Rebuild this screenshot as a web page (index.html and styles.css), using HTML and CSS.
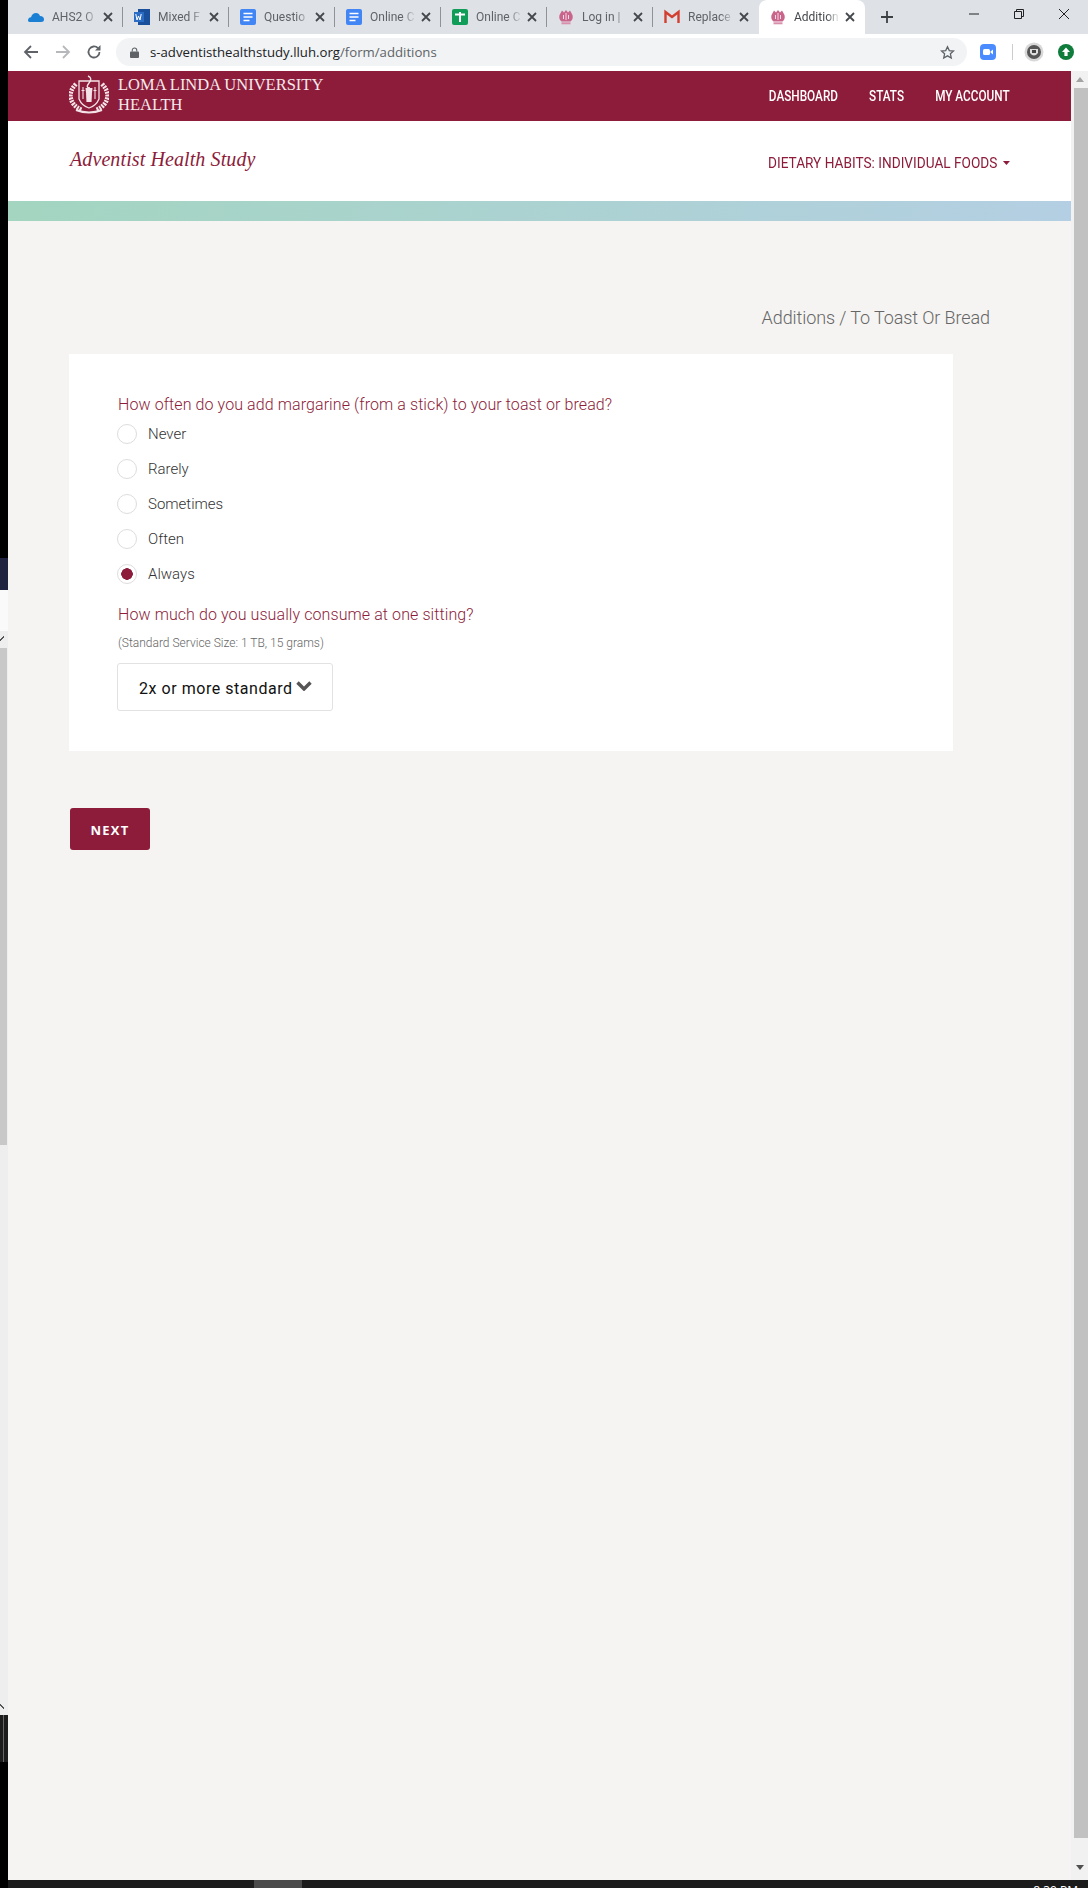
FILE: index.html
```html
<!DOCTYPE html>
<html lang="en">
  <head>
    <meta charset="UTF-8" />
    <meta name="viewport" content="width=device-width, initial-scale=1.0" />
    <title>Additions</title>
    <link rel="stylesheet" href="styles.css">
  </head>
  <body>
    <svg class="defs" width="0" height="0">
      <defs>
        <symbol id="llu" viewBox="0 0 16 16">
          <path d="M4 1.500L6 3.500 8 1l2 2.500 2-2L14.500 6q1 4-2 6.500h-9Q.5 10 1.500 6z" fill="#c9658b"/>
          <path d="M8 4v7M5.500 6v4M10.500 6v4" stroke="#f3d9e3"/>
          <path d="M3.500 14.300h9" stroke="#d88fab" stroke-width="2"/>
        </symbol>
        <symbol id="doc" viewBox="0 0 16 16">
          <rect width="16" height="16" rx="2" fill="#4285f4"/>
          <path d="M3.500 4.500h9M3.500 8h9M3.500 11.500h6" stroke="#fff" stroke-width="1.600"/>
        </symbol>
        <symbol id="close" viewBox="0 0 10 10">
          <path d="M1 1l8 8M9 1l-8 8" stroke="#45484c" stroke-width="1.800"/>
        </symbol>
      </defs>
    </svg>

    <div class="desktop-edge">
      <div class="edge-black"></div>
      <div class="edge-navy"></div>
      <div class="edge-light"></div>
      <div class="edge-track">
        <div class="edge-arrow edge-arrow-up"></div>
        <div class="edge-thumb"></div>
        <div class="edge-arrow edge-arrow-down"></div>
      </div>
      <div class="edge-dark"></div>
      <div class="edge-black edge-end"></div>
    </div>

    <div class="screen">
      <div class="browser">
        <div class="tabstrip">
          <div class="tab">
            <svg class="favicon" viewBox="0 0 16 16"><path d="M0 11.500q0-3 3-3.300Q4.500 4 8 4q3 0 4 3 4 .3 4 3.500 0 2.500-3 2.500H3q-3 0-3-1.500z" fill="#1b7fd4"/></svg>
            <span class="tab-title">AHS2 O</span>
            <svg class="tab-close"><use href="#close"/></svg>
          </div>
          <div class="tab">
            <svg class="favicon" viewBox="0 0 16 16"><rect x="4" y="0" width="12" height="16" fill="#1a4f9c"/><rect x="0" y="3" width="10" height="10" fill="#2b6cc4"/><path d="M1.800 5l1.200 6 1.500-4 1.500 4 1.200-6" stroke="#fff" fill="none"/></svg>
            <span class="tab-title">Mixed F</span>
            <svg class="tab-close"><use href="#close"/></svg>
          </div>
          <div class="tab">
            <svg class="favicon"><use href="#doc"/></svg>
            <span class="tab-title">Questio</span>
            <svg class="tab-close"><use href="#close"/></svg>
          </div>
          <div class="tab">
            <svg class="favicon"><use href="#doc"/></svg>
            <span class="tab-title">Online C</span>
            <svg class="tab-close"><use href="#close"/></svg>
          </div>
          <div class="tab">
            <svg class="favicon" viewBox="0 0 16 16"><rect width="16" height="16" rx="2" fill="#0f9d58"/><path d="M3 5.500h10M8 3v10" stroke="#fff" stroke-width="2"/></svg>
            <span class="tab-title">Online C</span>
            <svg class="tab-close"><use href="#close"/></svg>
          </div>
          <div class="tab">
            <svg class="favicon"><use href="#llu"/></svg>
            <span class="tab-title">Log in |</span>
            <svg class="tab-close"><use href="#close"/></svg>
          </div>
          <div class="tab tab-last">
            <svg class="favicon" viewBox="0 0 16 16"><path d="M1.500 14V3L8 8l6.500-5v11" stroke="#d23f31" stroke-width="2.400" fill="none"/></svg>
            <span class="tab-title">Replace</span>
            <svg class="tab-close"><use href="#close"/></svg>
          </div>
          <div class="tab tab-active">
            <svg class="favicon"><use href="#llu"/></svg>
            <span class="tab-title">Addition</span>
            <svg class="tab-close"><use href="#close"/></svg>
          </div>
          <svg class="new-tab" viewBox="0 0 12 12"><path d="M6 0v12M0 6h12" stroke="#3c4043" stroke-width="1.800"/></svg>
          <div class="window-controls">
            <svg viewBox="0 0 10 10"><path d="M0 5h10" stroke="#222"/></svg>
            <svg viewBox="0 0 10 10"><path d="M.5 2.500h7v7h-7zM2.500 2.500v-2h7v7h-2" stroke="#222" fill="none"/></svg>
            <svg viewBox="0 0 10 10"><path d="M0 0l10 10M10 0L0 10" stroke="#222"/></svg>
          </div>
        </div>

        <div class="toolbar">
          <svg class="tool" viewBox="0 0 16 16"><path d="M15 8H2M8 2L2 8l6 6" stroke="#5f6368" stroke-width="1.800" fill="none"/></svg>
          <svg class="tool" viewBox="0 0 16 16"><path d="M1 8h13M8 2l6 6-6 6" stroke="#b6b8bb" stroke-width="1.800" fill="none"/></svg>
          <svg class="tool tool-reload" viewBox="0 0 16 16"><path d="M13.500 8A5.500 5.500 0 1 1 12 4.200" stroke="#5f6368" stroke-width="1.800" fill="none"/><path d="M14.500 1v5.500H9z" fill="#5f6368"/></svg>
          <div class="omnibox">
            <svg class="lock" viewBox="0 0 10 12"><rect y="5" width="10" height="7" rx="1" fill="#5f6368"/><path d="M2.500 5V3.500a2.500 2.500 0 0 1 5 0V5" stroke="#5f6368" stroke-width="1.200" fill="none"/></svg>
            <span class="url">s-adventisthealthstudy.lluh.org<span class="url-path">/form/additions</span></span>
            <svg class="star" viewBox="0 0 16 16"><path d="M8 1.800l1.900 4.100 4.500.5-3.300 3 .9 4.500L8 11.600l-4 2.300.9-4.500-3.300-3 4.500-.5z" stroke="#5f6368" stroke-width="1.400" fill="none"/></svg>
          </div>
          <svg class="ext-zoom" viewBox="0 0 16 16"><rect width="16" height="16" rx="4" fill="#4a8cff"/><rect x="3" y="5" width="7" height="6" rx="1.500" fill="#fff"/><path d="M10.500 7.500l2.500-2v5l-2.500-2z" fill="#fff"/></svg>
          <div class="toolbar-sep"></div>
          <svg class="avatar" viewBox="0 0 20 20"><circle cx="10" cy="10" r="9.500" fill="#d8d8d8"/><circle cx="10" cy="10" r="7" fill="#555"/><path d="M6 7h8v4q-4 5-8 0z" fill="#ddd"/><path d="M8 8h4v3H8z" fill="#444"/></svg>
          <svg class="ext-update" viewBox="0 0 16 16"><circle cx="8" cy="8" r="8" fill="#0f7c3b"/><path d="M8 3.500L12 8H9.600v4H6.400V8H4z" fill="#fff"/></svg>
        </div>

        <div class="viewport">
          <div class="page">
            <header class="brandbar">
              <div class="brand">
                <svg class="crest" viewBox="0 0 40 40">
                  <path d="M7 9Q1 15 1.500 22 3 31 13 35M33 9q6 6 5.500 13-1.500 9-11.500 13" stroke="#f3e3e8" stroke-width="4.500" stroke-dasharray="2 1" fill="none"/>
                  <path d="M10 6h20v18q-3 7-10 9-7-2-10-9z" fill="#8c1c3a" stroke="#f3e3e8" stroke-width="1.300"/>
                  <path d="M16.500 13h7L22 27h-4z" fill="#f3e3e8"/>
                  <path d="M14 12v12M26 12v12M12.500 15.500h3M24.500 15.500h3M18 19v8M22 19v8" stroke="#f3e3e8" stroke-width="1.100"/>
                  <path d="M19 1q5 2 1 7t1 5" stroke="#f3e3e8" stroke-width="1.400" fill="none"/>
                  <path d="M7 35q13 5 26 0" stroke="#f3e3e8" stroke-width="2.200" fill="none"/>
                </svg>
                <div class="brand-name">LOMA LINDA UNIVERSITY<br>HEALTH</div>
              </div>
              <nav class="mainnav">
                <a>DASHBOARD</a>
                <a>STATS</a>
                <a>MY ACCOUNT</a>
              </nav>
            </header>

            <div class="subheader">
              <div class="study-name">Adventist Health Study</div>
              <div class="section-menu">DIETARY HABITS: INDIVIDUAL FOODS<span class="caret"></span></div>
            </div>

            <div class="gradient-bar"></div>

            <main class="content">
              <h2 class="crumb">Additions / To Toast Or Bread</h2>
              <form class="card">
                <p class="question">How often do you add margarine (from a stick) to your toast or bread?</p>
                <label class="choice"><input type="radio" name="freq" />Never</label>
                <label class="choice"><input type="radio" name="freq" />Rarely</label>
                <label class="choice"><input type="radio" name="freq" />Sometimes</label>
                <label class="choice"><input type="radio" name="freq" />Often</label>
                <label class="choice"><input type="radio" name="freq" checked />Always</label>
                <p class="question question-second">How much do you usually consume at one sitting?</p>
                <p class="note">(Standard Service Size: 1 TB, 15 grams)</p>
                <div class="dropdown">
                  <span>2x or more standard</span>
                  <svg class="chevron" viewBox="0 0 16 10"><path d="M1.500 1.500L8 8l6.500-6.500" stroke="#555" stroke-width="3.400" fill="none"/></svg>
                </div>
              </form>
              <button class="next-btn" type="button">NEXT</button>
            </main>
          </div>

          <div class="scrollbar">
            <div class="scroll-arrow scroll-up"></div>
            <div class="scroll-thumb"></div>
            <div class="scroll-arrow scroll-down"></div>
          </div>
        </div>
      </div>

      <div class="taskbar">
        <div class="task-active"></div>
        <div class="clock">8:39 PM</div>
      </div>
    </div>
  </body>
</html>
```

FILE: styles.css
```css
html,
body {
  margin: 0;
  padding: 0;
  height: 100%;
  overflow: hidden;
}
body {
  display: flex;
  width: 1088px;
  height: 1888px;
  background-color: #000;
  font-family: "Roboto", sans-serif;
  color: #333;
}
.defs {
  position: absolute;
}

/* strip of the window behind */
.desktop-edge {
  flex: 0 0 8px;
  display: flex;
  flex-direction: column;
}
.edge-black {
  height: 558px;
  background-color: #000;
}
.edge-navy {
  height: 32px;
  background-color: #1f2340;
}
.edge-light {
  height: 41px;
  background-color: #fafafa;
}
.edge-track {
  height: 1084px;
  display: flex;
  flex-direction: column;
  background-color: #eee;
}
.edge-arrow {
  height: 17px;
  flex: none;
}
.edge-arrow-up {
  background: linear-gradient(135deg, #eee 50%, #555 50%, #555 65%, #eee 65%) no-repeat 0 4px / 4px 6px;
}
.edge-arrow-down {
  margin-top: auto;
  background: linear-gradient(45deg, #eee 50%, #555 50%, #555 65%, #eee 65%) no-repeat 0 6px / 4px 6px;
}
.edge-thumb {
  height: 497px;
  width: 7px;
  background-color: #c8c8c8;
}
.edge-dark {
  height: 47px;
  background: linear-gradient(90deg, #1c1c1c 3px, #666 3px, #666 4px, #1c1c1c 4px);
}
.edge-end {
  flex: 1;
  height: auto;
}

.screen {
  flex: 1;
  min-width: 0;
  display: flex;
  flex-direction: column;
}
.browser {
  flex: 1;
  min-height: 0;
  display: flex;
  flex-direction: column;
}

/* tabs */
.tabstrip {
  height: 34px;
  flex: none;
  display: flex;
  align-items: stretch;
  padding-left: 9px;
  background-color: #dee1e6;
}
.tab {
  position: relative;
  box-sizing: border-box;
  width: 106px;
  display: flex;
  align-items: center;
  padding: 0 10px 0 11px;
  font-size: 12px;
  color: #5f6368;
}
.tab::after {
  content: "";
  position: absolute;
  right: 0;
  top: 7px;
  height: 20px;
  width: 1px;
  background-color: #8f9296;
}
.tab-last::after,
.tab-active::after {
  display: none;
}
.tab-active {
  background-color: #fff;
  border-radius: 8px 8px 0 0;
  color: #45484c;
}
.favicon {
  width: 16px;
  height: 16px;
  flex: none;
  margin-right: 8px;
}
.tab-title {
  flex: 1;
  min-width: 0;
  margin-right: 5px;
  overflow: hidden;
  white-space: nowrap;
  -webkit-mask-image: linear-gradient(90deg, #000 70%, transparent 100%);
  mask-image: linear-gradient(90deg, #000 70%, transparent 100%);
}
.tab-close {
  width: 10px;
  height: 10px;
  flex: none;
}
.new-tab {
  width: 12px;
  height: 12px;
  margin: 11px 0 0 16px;
}
.window-controls {
  margin-left: auto;
  display: flex;
  gap: 35px;
  padding: 9px 19px 0 0;
}
.window-controls svg {
  width: 10px;
  height: 10px;
}

/* toolbar */
.toolbar {
  height: 37px;
  flex: none;
  box-sizing: border-box;
  display: flex;
  align-items: center;
  padding: 0 14px 1px 15px;
  background-color: #fff;
}
.tool {
  width: 16px;
  height: 16px;
  margin-right: 16px;
}
.tool-reload {
  margin-left: -1px;
}
.omnibox {
  width: 851px;
  height: 28px;
  margin-left: -2px;
  box-sizing: border-box;
  display: flex;
  align-items: center;
  padding: 0 12px 0 14px;
  border-radius: 14px;
  background-color: #f1f3f4;
}
.lock {
  width: 9px;
  height: 11px;
  margin-right: 11px;
}
.url {
  font-family: "Open Sans", sans-serif;
  font-size: 13.200px;
  color: #202124;
}
.url-path {
  color: #5f6368;
}
.star {
  width: 15px;
  height: 15px;
  margin-left: auto;
}
.ext-zoom {
  width: 16px;
  height: 16px;
  margin-left: 13px;
}
.toolbar-sep {
  width: 1px;
  height: 16px;
  margin: 0 11px 0 16px;
  background-color: #ccc;
}
.avatar {
  width: 20px;
  height: 20px;
}
.ext-update {
  width: 16px;
  height: 16px;
  margin-left: 14px;
}

/* page */
.viewport {
  flex: 1;
  min-height: 0;
  display: flex;
}
.page {
  flex: 1;
  min-width: 0;
  display: flex;
  flex-direction: column;
  background-color: #f5f4f2;
}
.brandbar {
  height: 50px;
  flex: none;
  display: flex;
  justify-content: space-between;
  box-sizing: border-box;
  padding: 0 61px;
  background-color: #8c1c3a;
  color: #fff;
}
.brand {
  display: flex;
  align-items: center;
  gap: 9px;
}
.crest {
  width: 40px;
  height: 40px;
  margin-top: -3px;
}
.brand-name {
  font-family: "Liberation Serif", serif;
  font-size: 16.500px;
  line-height: 20px;
  color: #f5e9ec;
  margin-top: -2px;
}
/* no condensed face installed, squeeze it */
.mainnav {
  display: flex;
  align-items: center;
  gap: 37px;
  font-size: 14px;
  font-weight: 500;
  transform: scaleX(0.84);
  transform-origin: right center;
}
.subheader {
  height: 80px;
  flex: none;
  display: flex;
  justify-content: space-between;
  align-items: center;
  box-sizing: border-box;
  padding: 0 61px 0 62px;
  background-color: #fff;
}
.study-name {
  font-family: "Liberation Serif", serif;
  font-style: italic;
  font-size: 20px;
  letter-spacing: 0.1px;
  color: #8c1c3a;
  margin-top: -3px;
}
.section-menu {
  font-size: 15.500px;
  color: #8c1c3a;
  display: flex;
  align-items: center;
  margin-top: 3px;
  transform: scaleX(0.88);
  transform-origin: right center;
}
.caret {
  width: 0;
  height: 0;
  margin-left: 6px;
  border-top: 4px solid #8c1c3a;
  border-left: 4px solid transparent;
  border-right: 4px solid transparent;
}
.gradient-bar {
  height: 20px;
  flex: none;
  background: linear-gradient(95deg, #a3d5c0, #b4cfe3);
}
.content {
  padding: 0 0 0 61px;
}
.crumb {
  margin: 84px 0 24px;
  width: 921px;
  text-align: right;
  font-size: 18px;
  font-weight: 300;
  letter-spacing: -0.1px;
  line-height: 25px;
  color: #666;
}
.card {
  box-sizing: border-box;
  width: 884px;
  padding: 41px 49px 40px;
  background-color: #fff;
}
.question {
  margin: 0 0 1px;
  font-size: 16px;
  font-weight: 300;
  letter-spacing: 0.09px;
  line-height: 20px;
  color: #8c1c3a;
}
.question-second {
  margin: 14px 0 11px;
}
.choice {
  display: flex;
  align-items: center;
  height: 35px;
  font-size: 15px;
  font-weight: 300;
}
.choice input {
  appearance: none;
  -webkit-appearance: none;
  box-sizing: border-box;
  width: 20px;
  height: 20px;
  margin: 0 11px 0 -1px;
  border: 1px solid #ddd;
  border-radius: 50%;
  background-color: #fff;
}
.choice input:checked {
  background: radial-gradient(circle, #8c1c3a 5.500px, #fff 6px);
}
.note {
  margin: 0 0 13px;
  font-size: 12px;
  font-weight: 300;
  line-height: 14px;
  color: #666;
}
.dropdown {
  box-sizing: border-box;
  width: 216px;
  height: 48px;
  margin-left: -1px;
  display: flex;
  align-items: center;
  gap: 3px;
  padding: 2px 0 0 21px;
  border: 1px solid #e2e2e2;
  border-radius: 3px;
  font-size: 16px;
  letter-spacing: 0.54px;
  color: #111;
}
.chevron {
  width: 16px;
  height: 10px;
  margin-top: -4px;
}
.next-btn {
  display: block;
  width: 80px;
  height: 42px;
  margin: 57px 0 0 1px;
  padding: 2px 0 0;
  border: none;
  border-radius: 3px;
  background-color: #8c1c3a;
  color: #fff;
  font-family: "Open Sans", sans-serif;
  font-size: 13px;
  font-weight: 700;
  letter-spacing: 1.300px;
}

/* scrollbar */
.scrollbar {
  flex: 0 0 17px;
  display: flex;
  flex-direction: column;
  align-items: flex-end;
  background-color: #f1f1f1;
}
.scroll-arrow {
  width: 0;
  height: 0;
  margin: 0 4px;
  border-left: 4px solid transparent;
  border-right: 4px solid transparent;
}
.scroll-up {
  margin-top: 6px;
  margin-bottom: 6px;
  border-bottom: 5px solid #a3a3a3;
}
.scroll-thumb {
  width: 14px;
  height: 1750px;
  background-color: #c1c1c1;
}
.scroll-down {
  margin-top: 27px;
  border-top: 5px solid #505050;
}

/* taskbar */
.taskbar {
  height: 8px;
  flex: none;
  display: flex;
  overflow: hidden;
  background-color: #1b1b1b;
}
.task-active {
  width: 48px;
  margin-left: 246px;
  background-color: #4a4a4a;
}
.clock {
  margin-left: auto;
  margin-right: 10px;
  padding-top: 3px;
  font-family: "Open Sans", sans-serif;
  font-size: 12px;
  line-height: 16px;
  color: #fff;
}
```
